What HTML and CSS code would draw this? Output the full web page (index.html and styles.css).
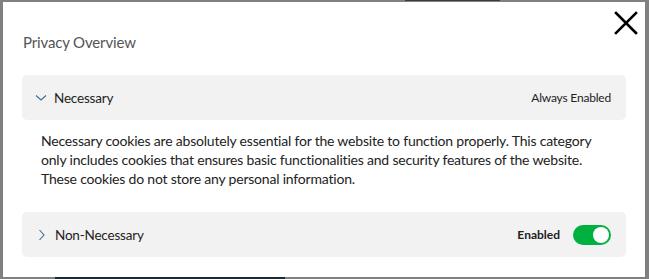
FILE: index.html
```html
<!DOCTYPE html>
<html lang="en">
<head>
<meta charset="utf-8">
<title>Privacy Overview</title>
<link rel="stylesheet" href="styles.css">
</head>
<body>
<div class="backdrop">
  <div class="bg-strip"></div>
  <div class="bg-image"></div>
</div>
<div class="modal">
  <button class="close" aria-label="Close">
    <svg width="24" height="24" viewBox="0 0 24 24"><path d="M2 2 L22 22 M22 2 L2 22" stroke="#000" stroke-width="2.6" stroke-linecap="square" fill="none"/></svg>
  </button>
  <h4 class="title">Privacy Overview</h4>
  <div class="section">
    <div class="acc-head">
      <svg class="chev-down" width="12" height="8" viewBox="0 0 12 8"><path d="M1 1.5 L6 6 L11 1.5" stroke="#3a6e8f" stroke-width="1.1" fill="none"/></svg>
      <span class="acc-name">Necessary</span>
      <span class="acc-status">Always Enabled</span>
    </div>
    <p class="desc">Necessary cookies are absolutely essential for the website to function properly. This category only includes cookies that ensures basic functionalities and security features of the website. These cookies do not store any personal information.</p>
  </div>
  <div class="section">
    <div class="acc-head">
      <svg class="chev-right" width="8" height="12" viewBox="0 0 8 12"><path d="M1.5 1 L6 6 L1.5 11" stroke="#3a6e8f" stroke-width="1.1" fill="none"/></svg>
      <span class="acc-name">Non-Necessary</span>
      <span class="acc-status bold">Enabled</span>
      <span class="toggle"><span class="knob"></span></span>
    </div>
  </div>
</div>
</body>
</html>
```
FILE: styles.css
```css
html, body {
  margin: 0;
  padding: 0;
}
body {
  background: #808080;
  width: 649px;
  height: 279px;
  overflow: hidden;
  position: relative;
  font-family: "Source Sans Pro", Lato, sans-serif;
}
.backdrop {
  position: absolute;
  inset: 0;
}
.bg-strip {
  position: absolute;
  left: 405px;
  top: 0;
  width: 95px;
  height: 1px;
  background: #3a3a3a;
}
.bg-image {
  position: absolute;
  left: 55px;
  top: 277px;
  width: 230px;
  height: 10px;
  background: #1c2a33;
}
.modal {
  position: relative;
  margin: 2px 4px 0 3px;
  height: 275px;
  background: #fff;
  padding: 30px 19px 0 19px;
  box-sizing: border-box;
}
.close {
  position: absolute;
  right: 7px;
  top: 9px;
  padding: 0;
  border: 0;
  background: none;
  width: 24px;
  height: 24px;
}
.close svg { display: block; }
.title {
  margin: 0 0 23px 1px;
  font-size: 15px;
  font-weight: 400;
  line-height: 20px;
  letter-spacing: -0.15px;
  color: #555;
}
.acc-head {
  display: flex;
  align-items: center;
  height: 45px;
  background: #f2f2f2;
  border-radius: 5px;
  padding: 0 15px 0 13px;
}
.chev-down { margin-right: 7px; }
.chev-right { margin: 0 9px 0 3px; }
.acc-name {
  font-size: 13.5px;
  letter-spacing: -0.2px;
  color: #222;
  flex: 1;
}
.acc-status {
  font-size: 12px;
  letter-spacing: -0.2px;
  color: #222;
}
.acc-status.bold {
  font-weight: 700;
  letter-spacing: 0;
  margin-right: 13px;
}
.toggle {
  position: relative;
  width: 38px;
  height: 20px;
  border-radius: 10px;
  background: #00b140;
}
.knob {
  position: absolute;
  right: 2px;
  top: 2px;
  width: 16px;
  height: 16px;
  border-radius: 50%;
  background: #fff;
}
.desc {
  margin: 11px 0 24px 0;
  padding: 0 20px 0 19px;
  font-size: 14px;
  line-height: 19px;
  letter-spacing: -0.2px;
  color: #222;
}
```
